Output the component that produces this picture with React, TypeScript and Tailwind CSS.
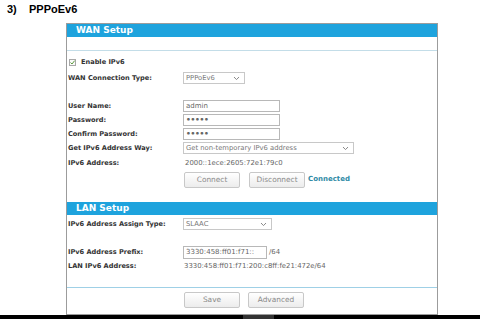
import React from "react";

const FONT = "[font-family:'DejaVu_Sans',Verdana,sans-serif]";

function Chevron() {
  return (
    <svg width="7" height="5" viewBox="0 0 7 5" className="shrink-0">
      <path d="M1 1 L3.5 3.6 L6 1" fill="none" stroke="#8a8a8a" strokeWidth="1" />
    </svg>
  );
}

function Select({ w, text }: { w: string; text: string }) {
  return (
    <div
      className={`${w} h-[12px] border border-[#c8c8c8] bg-white flex items-center justify-between pl-[2px] pr-[4px] text-[6.8px] text-[#777]`}
    >
      <span className="leading-none">{text}</span>
      <Chevron />
    </div>
  );
}

function Input({ w, text, h = "h-[12px]", dots = false }: { w: string; text: string; h?: string; dots?: boolean }) {
  return (
    <div className={`${w} ${h} border border-[#b8b8b8] bg-white flex items-center pl-[2px] text-[#666] ${dots ? "text-[7.5px] font-bold text-[#222] tracking-[-0.3px]" : "text-[7px]"}`}>
      <span className="leading-none">{text}</span>
    </div>
  );
}

function Btn({ text }: { text: string }) {
  return (
    <div className="w-[56px] h-[16px] border border-[#c8c8c8] rounded-[2px] bg-gradient-to-b from-white to-[#ececec] flex items-center justify-center text-[7.4px] text-[#8a8a8a]">
      {text}
    </div>
  );
}

function Label({ children }: { children: React.ReactNode }) {
  return (
    <div className="w-[116px] pl-[1px] font-bold text-[6.6px] text-[#333] leading-none shrink-0">{children}</div>
  );
}

function Header({ text }: { text: string }) {
  return (
    <div className="h-[13px] bg-[#1ea3dd] flex items-center pl-[9px]">
      <span className="text-white font-bold text-[9px] leading-none">{text}</span>
    </div>
  );
}

export default function App() {
  return (
    <div className={`w-[480px] h-[319px] bg-white relative overflow-hidden ${FONT}`}>
      <div className="h-[23px] pl-[7px] pt-[2px] flex items-start [font-family:'Liberation_Sans',Arial,sans-serif] font-bold text-[11px] text-black leading-[14px]">
        <span className="w-[22px]">3)</span>
        <span>PPPoEv6</span>
      </div>

      <div className="ml-[66px] w-[372px] h-[292px] border border-[#9c9c9c] flex flex-col">
        <Header text="WAN Setup" />
        <div className="h-[13px]" />
        <div className="h-px bg-[#c3dde8]" />

        {/* Enable IPv6 */}
        <div className="h-[21px] flex items-center pl-[2px] pt-[2px]">
          <svg width="7" height="7" viewBox="0 0 7 7" className="shrink-0">
            <rect x="0.5" y="0.5" width="6" height="6" fill="#fafafa" stroke="#a8a8a8" />
            <path d="M1.5 3.5 L3 5 L5.7 1.6" fill="none" stroke="#5c9a3e" strokeWidth="1" />
          </svg>
          <span className="ml-[5px] font-bold text-[6.6px] text-[#333] leading-none">Enable IPv6</span>
        </div>

        <div className="h-[12px] flex items-center">
          <Label>WAN Connection Type:</Label>
          <Select w="w-[62px]" text="PPPoEv6" />
        </div>

        <div className="h-[15px]" />

        <div className="h-[14px] flex items-center">
          <Label>User Name:</Label>
          <Input w="w-[97px]" text="admin" />
        </div>
        <div className="h-[14px] flex items-center">
          <Label>Password:</Label>
          <Input w="w-[97px]" text="•••••" dots />
        </div>
        <div className="h-[14px] flex items-center">
          <Label>Confirm Password:</Label>
          <Input w="w-[97px]" text="•••••" dots />
        </div>
        <div className="h-[14px] flex items-center">
          <Label>Get IPv6 Address Way:</Label>
          <Select w="w-[171px]" text="Get non-temporary IPv6 address" />
        </div>
        <div className="h-[16px] flex items-center">
          <Label>IPv6 Address:</Label>
          <span className="text-[6.9px] text-[#666] leading-none pl-[2px]">2000::1ece:2605:72e1:79c0</span>
        </div>
        <div className="h-[17px] flex items-center">
          <div className="w-[117px] shrink-0" />
          <Btn text="Connect" />
          <div className="w-[9px]" />
          <Btn text="Disconnect" />
          <span className="ml-[3px] font-bold text-[7px] text-[#2e8aa5] leading-none">Connected</span>
        </div>

        <div className="h-[14px]" />
        <Header text="LAN Setup" />

        <div className="h-[17px] flex items-center pt-[1px]">
          <Label>IPv6 Address Assign Type:</Label>
          <Select w="w-[89px]" text="SLAAC" />
        </div>

        <div className="h-[13px]" />
        <div className="h-[15px] flex items-center">
          <Label>IPv6 Address Prefix:</Label>
          <Input w="w-[84px]" h="h-[13px]" text="3330:458:ff01:f71::" />
          <span className="ml-[2px] text-[6.9px] text-[#666] leading-none">/64</span>
        </div>
        <div className="h-[12px] flex items-center">
          <Label>LAN IPv6 Address:</Label>
          <span className="text-[6.9px] text-[#666] leading-none pl-[1px]">3330:458:ff01:f71:200:c8ff:fe21:472e/64</span>
        </div>

        <div className="h-[15px]" />
        <div className="h-px bg-[#9fd0e6]" />
        <div className="h-[4px]" />
        <div className="h-[16px] flex items-center">
          <div className="w-[117px] shrink-0" />
          <Btn text="Save" />
          <div className="w-[8px]" />
          <Btn text="Advanced" />
        </div>
      </div>

      <div className="absolute left-0 right-0 bottom-0 h-[4px] bg-black flex justify-center">
        <div className="w-[31px] h-full bg-[#333] ml-[36px]" />
      </div>
    </div>
  );
}
